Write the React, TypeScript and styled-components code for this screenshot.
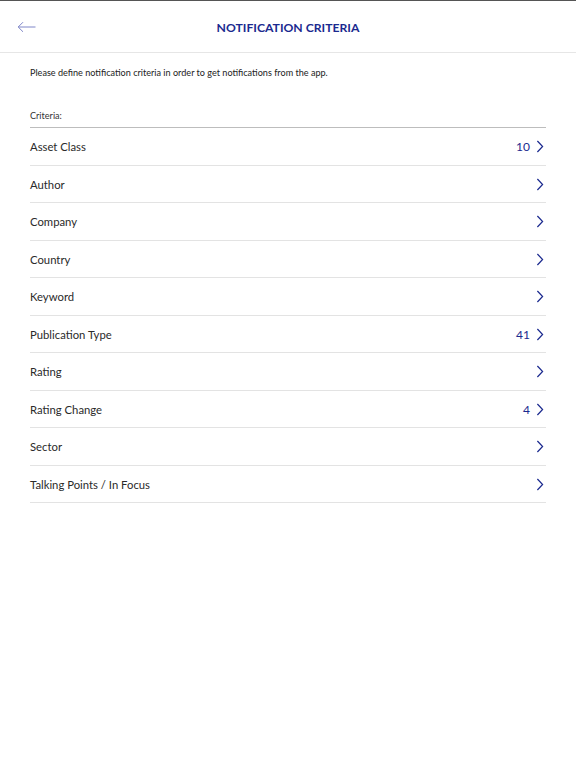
import React from "react";
import styled, { createGlobalStyle } from "styled-components";

const Global = createGlobalStyle`
  html, body { margin: 0; padding: 0; background: #fff; }
  body { font-family: Lato, "Noto Sans", sans-serif; color: #222; }
`;

const Page = styled.div`
  width: 576px;
  min-height: 768px;
  border-top: 1px solid #555;
  box-sizing: border-box;
  background: #fff;
`;

const Header = styled.header`
  height: 51px;
  border-bottom: 1px solid #e6e6e6;
  display: grid;
  grid-template-columns: 60px 1fr 60px;
  align-items: center;
`;

const BackButton = styled.button`
  border: 0;
  background: none;
  padding: 0 0 0 17px;
  height: 100%;
  display: flex;
  align-items: center;
  cursor: pointer;
`;

const Title = styled.h1`
  margin: 0;
  text-align: center;
  font-size: 12.2px;
  font-weight: 700;
  color: #1b2a8f;
  letter-spacing: 0;
  padding-top: 1px;
`;

const Content = styled.main`
  padding: 0 30px;
`;

const Intro = styled.p`
  margin: 0;
  padding-top: 14px;
  font-size: 9.1px;
  line-height: 12px;
  color: #222;
`;

const SectionLabel = styled.div`
  margin-top: 31px;
  font-size: 9.1px;
  line-height: 12px;
  padding-bottom: 5px;
  border-bottom: 1px solid #bdbdbd;
  color: #333;
`;

const List = styled.ul`
  list-style: none;
  margin: 0;
  padding: 0;
`;

const Row = styled.li`
  height: 37.5px;
  box-sizing: border-box;
  border-bottom: 1px solid #e3e3e3;
  display: flex;
  align-items: center;
  justify-content: space-between;
  padding-top: 1px;
`;

const RowLabel = styled.span`
  font-size: 11.3px;
  color: #2a2a2a;
`;

const RowRight = styled.span`
  display: flex;
  align-items: center;
  gap: 6px;
  color: #1b2a8f;
  font-size: 12px;
  padding-right: 2px;
`;

const Chevron = () => (
  <svg width="8" height="13" viewBox="0 0 8 13">
    <path d="M1.4 1 L6.6 6.5 L1.4 12" fill="none" stroke="#1b2a8f" strokeWidth="1.2" />
  </svg>
);

const BackArrow = () => (
  <svg width="19" height="12" viewBox="0 0 19 12">
    <path d="M18.5 6 H1.2 M6 1.2 L1.2 6 L6 10.8" fill="none" stroke="#7f86c8" strokeWidth="1" />
  </svg>
);

const items: { label: string; count?: number }[] = [
  { label: "Asset Class", count: 10 },
  { label: "Author" },
  { label: "Company" },
  { label: "Country" },
  { label: "Keyword" },
  { label: "Publication Type", count: 41 },
  { label: "Rating" },
  { label: "Rating Change", count: 4 },
  { label: "Sector" },
  { label: "Talking Points / In Focus" },
];

export default function App() {
  return (
    <>
      <Global />
      <Page>
        <Header>
          <BackButton aria-label="Back">
            <BackArrow />
          </BackButton>
          <Title>NOTIFICATION CRITERIA</Title>
          <span />
        </Header>
        <Content>
          <Intro>Please define notification criteria in order to get notifications from the app.</Intro>
          <SectionLabel>Criteria:</SectionLabel>
          <List>
            {items.map((it) => (
              <Row key={it.label}>
                <RowLabel>{it.label}</RowLabel>
                <RowRight>
                  {it.count !== undefined && <span>{it.count}</span>}
                  <Chevron />
                </RowRight>
              </Row>
            ))}
          </List>
        </Content>
      </Page>
    </>
  );
}
